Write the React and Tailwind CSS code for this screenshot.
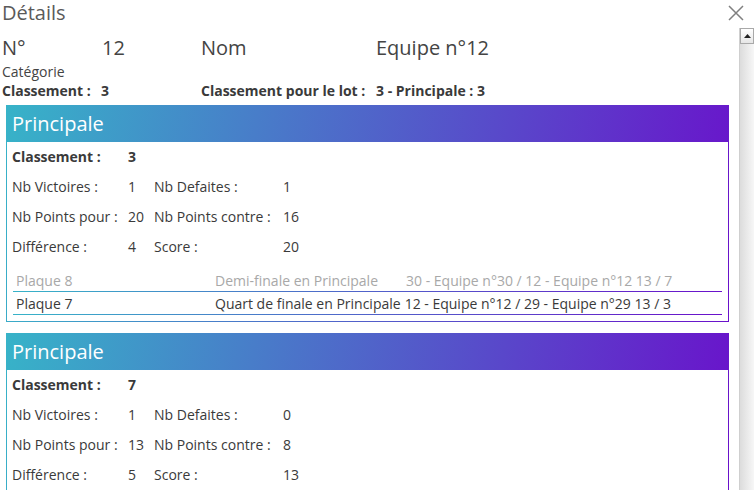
import React from 'react';

const grad = 'bg-[linear-gradient(100deg,#37b3c8,#6a11cb)]';

const poules = [
  {
    titre: 'Principale',
    classement: 3,
    victoires: 1,
    defaites: 1,
    pointsPour: 20,
    pointsContre: 16,
    difference: 4,
    score: 20,
    matchs: [
      { plaque: 'Plaque 8', tour: 'Demi-finale en Principale', detail: '30 - Equipe n°30 / 12 - Equipe n°12 13 / 7', passe: true },
      { plaque: 'Plaque 7', tour: 'Quart de finale en Principale', detail: '12 - Equipe n°12 / 29 - Equipe n°29 13 / 3' },
    ],
  },
  {
    titre: 'Principale',
    classement: 7,
    victoires: 1,
    defaites: 0,
    pointsPour: 13,
    pointsContre: 8,
    difference: 5,
    score: 13,
    matchs: [],
  },
];

function CartePoule({ p }) {
  return (
    <div className={`${grad} ml-[6px] w-[723px]`}>
      <div className="h-[37px] pl-[6px] text-[20px] leading-[37px] text-white">{p.titre}</div>
      <div className="mx-px mb-px bg-white">
        <div className="grid grid-cols-[116px_26px_129px_1fr] pl-[5px] text-[14px] leading-[30px] text-[#3a3a3a]">
          <span className="font-bold">Classement :</span>
          <span className="font-bold">{p.classement}</span>
          <span />
          <span />
          <span>Nb Victoires :</span>
          <span>{p.victoires}</span>
          <span>Nb Defaites :</span>
          <span>{p.defaites}</span>
          <span>Nb Points pour :</span>
          <span>{p.pointsPour}</span>
          <span>Nb Points contre :</span>
          <span>{p.pointsContre}</span>
          <span>Différence :</span>
          <span>{p.difference}</span>
          <span>Score :</span>
          <span>{p.score}</span>
        </div>
        {p.matchs.length > 0 && (
          <div className="mx-[6px] mt-[7px] pb-[6px]">
            {p.matchs.map((m, i) => (
              <div key={i}>
                <div
                  className={`flex h-[22px] whitespace-nowrap pl-[3px] text-[14px] leading-[23px] ${
                    m.passe ? 'text-[#a8a8a8]' : 'text-[#3a3a3a]'
                  }`}
                >
                  <span className="w-[199px]">{m.plaque}</span>
                  <span className={m.passe ? 'w-[191px]' : 'pr-[4px]'}>{m.tour}</span>
                  <span>{m.detail}</span>
                </div>
                <div className={`${grad} h-px`} />
              </div>
            ))}
          </div>
        )}
      </div>
    </div>
  );
}

export default function App() {
  return (
    <div className="relative h-[490px] w-[754px] overflow-hidden bg-white font-['Open_Sans',sans-serif]">
      <div className="flex h-[28px] items-start justify-between">
        <h2 className="pl-[2px] text-[20px] leading-[26px] text-[#5a5a5a]">Détails</h2>
        <svg width="16" height="16" viewBox="0 0 16 16" className="mr-[10px] mt-[5px]">
          <path d="M1 1 L15 15 M15 1 L1 15" stroke="#808080" strokeWidth="1.5" fill="none" />
        </svg>
      </div>

      <div className="flex h-[462px]">
        <div className="flex-1 overflow-hidden">
          <div className="pl-[2px] pt-[6px] text-[#444]">
            <div className="grid grid-cols-[100px_99px_175px_1fr] text-[20px] leading-[28px]">
              <span>N°</span>
              <span>12</span>
              <span>Nom</span>
              <span>Equipe n°12</span>
            </div>
            <div className="text-[14px] leading-[19px]">Catégorie</div>
            <div className="grid grid-cols-[99px_100px_175px_1fr] text-[14px] font-bold leading-[19px] text-[#3a3a3a]">
              <span>Classement :</span>
              <span>3</span>
              <span>Classement pour le lot :</span>
              <span>3 - Principale : 3</span>
            </div>
          </div>

          <div className="mt-[5px] flex flex-col gap-[11px]">
            {poules.map((p, i) => (
              <CartePoule key={i} p={p} />
            ))}
          </div>
        </div>

        {/* barre de défilement */}
        <div className="flex w-[15px] flex-col border-l border-[#cfcfcf] bg-[linear-gradient(to_right,#dcdcdc,#f7f7f7)]">
          <div className="flex h-[16px] items-center justify-center border border-[#a9a9a9] bg-[linear-gradient(#ffffff,#e6e6e6)]">
            <svg width="7" height="4" viewBox="0 0 7 4">
              <path d="M0 4 L3.5 0 L7 4 Z" fill="#222" />
            </svg>
          </div>
        </div>
      </div>
    </div>
  );
}
